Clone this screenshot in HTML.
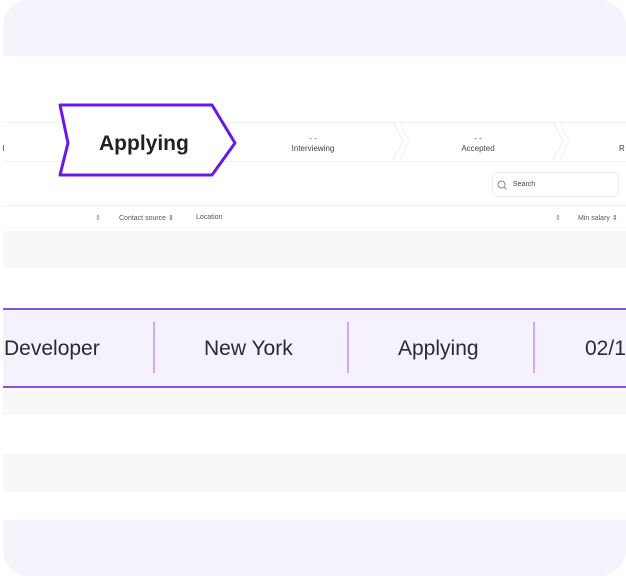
<!DOCTYPE html>
<html><head><style>
body{margin:0;width:626px;height:576px;background:#fff;font-family:"Liberation Sans",sans-serif;position:relative;overflow:hidden}
.card{position:absolute;left:3px;top:0;width:623px;height:576px;background:#f6f3fd;border-radius:26px;overflow:hidden}
.white{position:absolute;left:0;top:56px;width:623px;height:464px;background:#fff}
.abs{position:absolute}
.t{position:absolute;font-size:8px;color:#444;text-align:center}
.g{position:absolute;left:0;width:623px;background:#f8f8f8}
</style></head><body>
<div class="card">
<div class="white"></div>
<div class="abs" style="left:0;top:122px;width:623px;height:38px;border-top:1px solid #f0f0f0;border-bottom:1px solid #f0f0f0"></div>
<svg class="abs" style="left:0;top:0" width="623" height="576">
<path d="M390 122 L400 141 L390 160 M550 122 L560 141 L550 160" stroke="#ececec" fill="none"/>
<path d="M397 122 L406 141 L397 160 M557 122 L566 141 L557 160" stroke="#f2f2f2" fill="none"/>
<path d="M57 105 L209 105 L232 143 L209 175 L57 175 L65 143 Z" fill="#fff" stroke="#6a18e6" stroke-width="3" stroke-linejoin="round"/>
</svg>
<div class="t" style="left:-3px;top:144px;">d</div>
<div class="abs" style="left:96px;top:132px;font-size:21px;font-weight:bold;color:#222">Applying</div>
<div class="t" style="left:270px;top:134px;width:80px;line-height:10px">- -<br>Interviewing</div>
<div class="t" style="left:435px;top:134px;width:80px;line-height:10px">- -<br>Accepted</div>
<div class="t" style="left:616px;top:144px;">R</div>
<div class="abs" style="left:489px;top:172px;width:125px;height:23px;border:1px solid #eee;border-radius:5px"></div>
<svg class="abs" style="left:494px;top:180px" width="10" height="10"><circle cx="4.5" cy="4.5" r="3.5" stroke="#888" fill="none"/><path d="M7 7 L9.5 9.5" stroke="#888"/></svg>
<div class="abs" style="left:510px;top:181px;font-size:7px;color:#444">Search</div>
<div class="abs" style="left:0;top:205px;width:623px;height:25px;border-top:1px solid #eee;border-bottom:1px solid #eee"></div>
<div class="abs" style="left:92px;top:214px;font-size:7px;color:#888">⇕</div>
<div class="abs" style="left:116px;top:214px;font-size:7px;color:#555">Contact source ⇕</div>
<div class="abs" style="left:193px;top:214px;font-size:7px;color:#555">Location</div>
<div class="abs" style="left:552px;top:214px;font-size:7px;color:#888">⇕</div>
<div class="abs" style="left:575px;top:214px;font-size:7px;color:#555">Min salary ⇕</div>
<div class="g" style="top:231px;height:37px"></div>
<div class="abs" style="left:0;top:308px;width:623px;height:76px;background:#f6f2fd;border-top:2px solid #8b4fe0;border-bottom:2px solid #8b4fe0"></div>
<div class="abs" style="left:150px;top:322px;width:2px;height:51px;background:#cfa8f5"></div>
<div class="abs" style="left:344px;top:322px;width:2px;height:51px;background:#cfa8f5"></div>
<div class="abs" style="left:530px;top:322px;width:2px;height:51px;background:#cfa8f5"></div>
<div class="abs" style="left:1px;top:337px;font-size:21px;color:#2a2a30">Developer</div>
<div class="abs" style="left:201px;top:337px;font-size:21px;color:#2a2a30">New York</div>
<div class="abs" style="left:395px;top:337px;font-size:21px;color:#2a2a30">Applying</div>
<div class="abs" style="left:582px;top:337px;font-size:21px;color:#2a2a30">02/1</div>
<div class="g" style="top:388px;height:27px"></div>
<div class="g" style="top:454px;height:38px"></div>
</div>
</body></html>
